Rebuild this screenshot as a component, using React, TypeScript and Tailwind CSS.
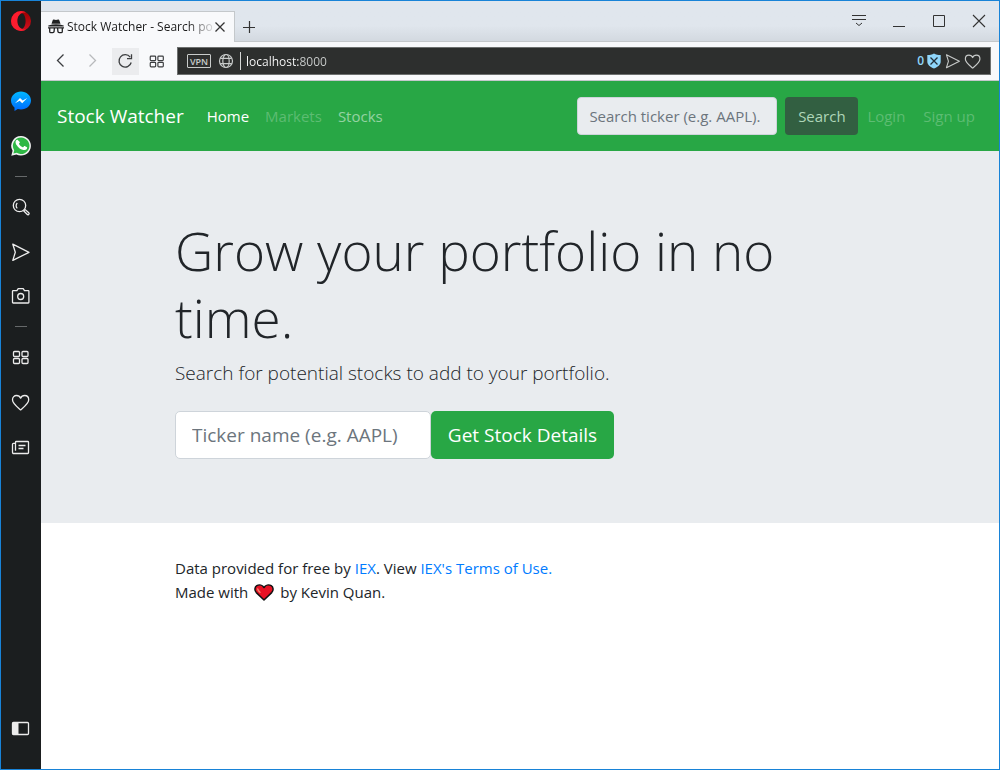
import type { ReactNode } from "react";

type IconProps = { className?: string };

function Stroke({ className = "", width = 1.3, children, box = 20 }: IconProps & { width?: number; children: ReactNode; box?: number }) {
  return (
    <svg className={className} viewBox={`0 0 ${box} ${box}`} fill="none" stroke="currentColor" strokeWidth={width} aria-hidden="true">
      {children}
    </svg>
  );
}

const OperaLogo = () => (
  <svg className="size-5" viewBox="0 0 20 20" aria-hidden="true">
    <defs>
      <linearGradient id="operaLeft" x1="0" y1="0" x2="0" y2="1">
        <stop offset="0" stopColor="#ff1b2d" />
        <stop offset="1" stopColor="#fa1e30" />
      </linearGradient>
      <linearGradient id="operaRight" x1="0" y1="0" x2="0" y2="1">
        <stop offset="0" stopColor="#9c0000" />
        <stop offset="1" stopColor="#d01020" />
      </linearGradient>
    </defs>
    <path fill="url(#operaRight)" fillRule="evenodd" d="M10 0a10 10 0 1 1 0 20a10 10 0 0 1 0-20zM10.400 2.200c-2.500 0-4.200 3.500-4.200 7.800s1.700 7.800 4.200 7.800s4.200-3.500 4.200-7.800s-1.700-7.800-4.200-7.800z" />
    <path fill="url(#operaLeft)" d="M10 0a10 10 0 0 0 0 20c2.200 0 4.200-.7 5.800-1.900c-1.100.6-2.300.6-3.600.3c-3.400-.8-5.900-4.200-5.900-8.400s2.500-7.600 5.900-8.400c1.300-.3 2.500-.2 3.600.3A10 10 0 0 0 10 0z" />
  </svg>
);

const MessengerIcon = () => (
  <svg className="size-5" viewBox="0 0 20 20" aria-hidden="true">
    <defs>
      <linearGradient id="messenger" x1="0" y1="0" x2="0" y2="1">
        <stop offset="0" stopColor="#00b8ff" />
        <stop offset="1" stopColor="#0068ff" />
      </linearGradient>
    </defs>
    <path fill="url(#messenger)" d="M10 .5C4.500.500 0 4.500 0 9.500c0 2.800 1.300 5.200 3.500 6.900V20l3.300-1.900c1 .3 2.100.4 3.200.4c5.500 0 10-4 10-9S15.500.500 10 .500z" />
    <path fill="#fff" d="M4 12.200l5-5.300l2.700 2.600L16.300 7l-5.100 5.300l-2.500-2.600z" />
  </svg>
);

const WhatsAppIcon = () => (
  <svg className="size-5" viewBox="0 0 20 20" aria-hidden="true">
    <path fill="#f2f2f2" d="M10.100 0A9.800 9.800 0 0 0 1.600 14.800L.3 19.800l5.100-1.400A9.800 9.800 0 1 0 10.100 0z" />
    <path fill="#2fb845" d="M10.100 1.600a8.200 8.200 0 0 0-6.900 12.600l-.8 3.400l3.400-.9A8.200 8.200 0 1 0 10.100 1.600z" />
    <path fill="#fff" d="M7.500 5.200c-.2-.4-.4-.4-.7-.4c-.8 0-1.900.9-1.900 2.500c0 1.500 1.100 3 1.300 3.200c.2.200 2.100 3.400 5.300 4.600c2.600 1 3.100.7 3.700.6c.600-.1 1.800-.8 2-1.500s.200-1.300.1-1.400c-.1-.2-.3-.2-.600-.4l-2-.9c-.3-.1-.5-.2-.7.1l-.9 1.100c-.2.200-.3.200-.6.100c-.9-.4-2.800-1.400-3.900-3.500c-.1-.3 0-.4.100-.6l.8-1c.1-.2.1-.4 0-.6z" transform="translate(0 -.6) scale(.93)" />
  </svg>
);

const SearchIcon = () => (
  <Stroke className="size-5">
    <circle cx="8.500" cy="8.500" r="6.200" />
    <path d="M6.300 11.400a3.700 3.700 0 0 1 0-5.400" />
    <path d="M12.800 13.900l1.300-1.300l3.700 3.200c1 .9-.500 2.600-1.500 1.700z" />
  </Stroke>
);
const SendIcon = ({ className = "size-5" }: IconProps) => (
  <Stroke className={className}>
    <path strokeLinejoin="round" d="M1.800 2.200L18 10.300L1.800 18.400L4.300 10.300z" />
  </Stroke>
);
const CameraIcon = () => (
  <Stroke className="size-5">
    <path strokeLinejoin="round" d="M2.200 4.600h3.700l1.300-1.900h5l1.300 1.900h3.700q.7 0 .7.700v11q0 .7-.7.700H2.200q-.7 0-.7-.7v-11q0-.7.700-.7z" />
    <circle cx="9.700" cy="10.500" r="3" />
  </Stroke>
);
const GridIcon = ({ className = "size-5" }: IconProps) => (
  <Stroke className={className}>
    <rect x="2.500" y="4.500" width="6" height="5" rx="1" />
    <rect x="11" y="4.500" width="6" height="5" rx="1" />
    <rect x="2.500" y="11.500" width="6" height="5" rx="1" />
    <rect x="11" y="11.500" width="6" height="5" rx="1" />
  </Stroke>
);
const HeartIcon = ({ className = "size-5" }: IconProps) => (
  <Stroke className={className}>
    <path strokeLinejoin="round" d="M9.600 17.900C6 14.800 1.500 11.600 1.500 7.800C1.500 5.200 3.400 3.500 5.500 3.500C7.300 3.500 8.900 4.500 9.600 6.200C10.300 4.500 11.900 3.500 13.700 3.500C15.900 3.500 17.700 5.200 17.700 7.800C17.700 11.600 13.200 14.800 9.600 17.900z" />
  </Stroke>
);
const NewsIcon = () => (
  <Stroke className="size-5">
    <path strokeLinejoin="round" d="M4.500 5.300q0-.8.800-.8h11.400q.8 0 .8.800v10.400q0 .8-.8.800H2.800q-1.300 0-1.300-1.300V7.200q0-.9.900-.9H4.500zM4.500 6.300v7.500" />
    <path d="M7.500 8.500h7M7.500 11.500h5" />
  </Stroke>
);
const PanelIcon = () => (
  <Stroke className="size-5">
    <rect x="1.500" y="4.500" width="16" height="12" rx="1" />
    <path fill="currentColor" stroke="none" d="M1.500 4.500h6v12h-6z" />
  </Stroke>
);

const IncognitoIcon = () => (
  <svg className="size-4 shrink-0" viewBox="0 0 16 16" fill="#202122" aria-hidden="true">
    <path d="M3.500 4.800L4.700 1.200Q5 .3 5.900.6L8 1.100L10.100.6Q11 .3 11.300 1.200L12.500 4.800z" />
    <path d="M.3 6.500Q8 4.200 15.700 6.500V7.400H.3z" />
    <path fill="none" stroke="#202122" strokeWidth="1.300" d="M0 8.900h16M1.700 9v3.400q0 1.200 1.200 1.200h1.900q1.200 0 1.300-1.200L6.400 9M9.600 9l.3 3.400q.1 1.200 1.300 1.200h1.900q1.200 0 1.200-1.200V9" />
  </svg>
);

function SideButton({ label, className, children }: { label: string; className: string; children: ReactNode }) {
  return (
    <button type="button" aria-label={label} className={`flex size-5 items-center justify-center ${className}`}>
      {children}
    </button>
  );
}

function Sidebar() {
  return (
    <aside className="flex w-10 shrink-0 flex-col items-center bg-[#1b1e1f] pt-[10px] pb-[31px] text-[#ececec]">
      <SideButton label="Opera menu" className=""><OperaLogo /></SideButton>
      <SideButton label="Messenger" className="mt-[60px]"><MessengerIcon /></SideButton>
      <SideButton label="WhatsApp" className="mt-[25px]"><WhatsAppIcon /></SideButton>
      <hr className="mt-5 w-3 border-[#66696a]" />
      <SideButton label="Search" className="mt-5"><SearchIcon /></SideButton>
      <SideButton label="My Flow" className="mt-[25px]"><SendIcon /></SideButton>
      <SideButton label="Snapshot" className="mt-6"><CameraIcon /></SideButton>
      <hr className="mt-5 w-3 border-[#66696a]" />
      <SideButton label="Speed Dial" className="mt-5"><GridIcon /></SideButton>
      <SideButton label="Bookmarks" className="mt-[25px]"><HeartIcon /></SideButton>
      <SideButton label="News" className="mt-[25px]"><NewsIcon /></SideButton>
      <SideButton label="Toggle sidebar" className="mt-auto"><PanelIcon /></SideButton>
    </aside>
  );
}

function TabStrip() {
  return (
    <div className="flex h-[41px] items-stretch bg-linear-to-b from-[#e0e6ed] from-60% to-[#d2d8df]">
      <div className="mt-[10px] flex w-[194px] items-center border-t border-r border-[#c4c8cb] bg-[#f8f9fb] pl-[7px]">
        <IncognitoIcon />
        <span className="ml-[3px] w-[147px] bg-linear-to-r from-[#1a1a1a] from-82% to-[#1a1a1a]/10 bg-clip-text text-[12px] whitespace-nowrap text-transparent">
          Stock Watcher - Search po
        </span>
        <button type="button" aria-label="Close tab" className="text-[#333]">
          <Stroke className="size-3" box={12} width={1.3}><path d="M1.500 1.500l9 9M10.500 1.500l-9 9" /></Stroke>
        </button>
      </div>
      <div className="flex flex-1 items-center border-b border-[#c4c8cb] pl-2 text-[#333]">
        <button type="button" aria-label="New tab" className="mt-3">
          <Stroke className="size-3" box={12} width={1.2}><path d="M6.500 0v12M0 6.500h12" /></Stroke>
        </button>
        <div className="ml-auto flex items-center gap-6 pr-[12px]">
          <button type="button" aria-label="Tab menu">
            <Stroke className="size-4" box={16} width={1}><path d="M1 2.500h14M1 6.500h14M5 10l3 2.500l3-2.500" /></Stroke>
          </button>
          <button type="button" aria-label="Minimize">
            <Stroke className="size-4" box={16} width={1}><path d="M2 13.500h12" /></Stroke>
          </button>
          <button type="button" aria-label="Maximize">
            <Stroke className="size-4" box={16} width={1}><path d="M2.500 2.500h11v11h-11z" /></Stroke>
          </button>
          <button type="button" aria-label="Close window">
            <Stroke className="size-4" box={16} width={1.100}><path d="M2 2l12 12M14 2l-12 12" /></Stroke>
          </button>
        </div>
      </div>
    </div>
  );
}

function Toolbar() {
  return (
    <div className="flex h-[39px] items-center border-b border-[#c4c8cb] bg-[#f8f9fb] pr-2 pl-[10px] text-[#3c3e40]">
      <button type="button" aria-label="Back">
        <Stroke className="size-5" width={1.300}><path d="M12.500 3.500l-6 6l6 6" /></Stroke>
      </button>
      <button type="button" aria-label="Forward" disabled className="ml-3 text-[#b8babc]">
        <Stroke className="size-5" width={1.300}><path d="M6.500 3.500l6 6l-6 6" /></Stroke>
      </button>
      <button type="button" aria-label="Reload" className="ml-[9px] flex h-[27px] w-[27px] items-center justify-center bg-[#ebecee]">
        <Stroke className="size-5" width={1.300}>
          <path d="M14.200 6.200A6.200 6.200 0 1 0 15.200 11.500" />
          <path d="M15.500 3.200v4.500h-4.500" />
        </Stroke>
      </button>
      <button type="button" aria-label="Speed dial" className="ml-[9px]">
        <GridIcon className="size-[18px]" />
      </button>
      <div className="ml-[11px] flex h-[28px] flex-1 items-center border border-[#6d706f] bg-[#2d2f2e] pr-2 pl-[9px] text-[#c8cbca]">
        <button type="button" className="flex h-[14px] w-6 items-center justify-center rounded-[1px] border border-[#c8cbca] text-[9px] leading-none font-semibold">
          VPN
        </button>
        <Stroke className="ml-[7px] size-4" box={16} width={1.200}>
          <circle cx="8" cy="8" r="6.500" />
          <ellipse cx="8" cy="8" rx="3.200" ry="6.500" />
          <path d="M2.300 5.300h11.400M2.300 10.700h11.400" />
        </Stroke>
        <span className="ml-[6px] h-[18px] w-px bg-[#d5d7d6]" />
        <input
          type="text"
          aria-label="Address"
          defaultValue="localhost:8000"
          className="ml-[5px] h-5 min-w-0 flex-1 bg-linear-to-r from-white from-[54px] to-[#cdd0cf] to-[54px] bg-clip-text text-[12px] text-transparent outline-none"
        />
        <span className="mr-[2px] text-[12px] font-semibold text-[#8fd6fb]">0</span>
        <button type="button" aria-label="Ad blocker">
          <svg className="size-4" viewBox="0 0 16 16" aria-hidden="true">
            <path fill="#8fd6fb" d="M8 .5C6 2 4 2 1.300 2v6.500c0 3.500 3 5.500 6.700 7c3.700-1.500 6.700-3.500 6.700-7V2C12 2 10 2 8 .500z" />
            <path stroke="#22303a" strokeWidth="1.300" d="M4.500 4.500l7 7M11.500 4.500l-7 7" />
          </svg>
        </button>
        <button type="button" aria-label="Send to My Flow" className="ml-[3px]"><SendIcon className="size-4" /></button>
        <button type="button" aria-label="Add to bookmarks" className="ml-[3px]"><HeartIcon className="size-[18px]" /></button>
      </div>
    </div>
  );
}

function Navbar() {
  return (
    <nav className="flex h-[70px] items-center bg-[#28a745] px-4 text-[15px] leading-6">
      <a href="#" className="mr-4 text-[19px] leading-[30px] whitespace-nowrap text-white">Stock Watcher</a>
      <ul className="flex">
        <li><a href="#" className="py-2 pr-2 pl-[7px] text-white">Home</a></li>
        <li><a href="#" aria-disabled="true" className="p-2 text-white/25">Markets</a></li>
        <li><a href="#" className="p-2 text-white/50">Stocks</a></li>
      </ul>
      <form className="ml-auto flex gap-2">
        <input
          type="text"
          aria-label="Search ticker"
          disabled
          placeholder="Search ticker (e.g. AAPL)."
          className="h-[38px] w-[200px] rounded border border-[#ced4da] bg-[#e9ecef] px-[11px] placeholder:text-[#6c757d]"
        />
        <button type="submit" disabled className="h-[38px] w-[73px] rounded bg-[#325f41] text-[#aed6b8]">Search</button>
      </form>
      <ul className="ml-px flex gap-[2px] whitespace-nowrap">
        <li><a href="#" aria-disabled="true" className="p-2 text-white/25">Login</a></li>
        <li><a href="#" aria-disabled="true" className="p-2 text-white/25">Sign up</a></li>
      </ul>
    </nav>
  );
}

function Hero() {
  return (
    <section className="bg-[#e9ecef] pt-[66px] pb-16">
      <div className="mx-auto max-w-[720px] px-[15px]">
        <h1 className="text-[53px] leading-[67px] font-light">Grow your portfolio in no time.</h1>
        <p className="mt-[7px] text-[19px] leading-[30px] font-light">Search for potential stocks to add to your portfolio.</p>
        <form className="mt-[23px] flex text-[19px]">
          <input
            type="text"
            aria-label="Ticker name"
            placeholder="Ticker name (e.g. AAPL)"
            className="h-12 w-64 rounded-[5px] border border-[#ced4da] bg-white px-4 placeholder:text-[#6c757d]"
          />
          <button type="submit" className="h-12 w-[183px] rounded-[5px] bg-[#28a745] whitespace-nowrap text-white">Get Stock Details</button>
        </form>
      </div>
    </section>
  );
}

function Footer() {
  return (
    <footer className="mx-auto w-full max-w-[720px] px-[15px] pt-[33px] text-[15px] leading-6">
      <p>
        Data provided for free by <a href="#" className="text-[#007bff]">IEX</a>. View{" "}
        <a href="#" className="text-[#007bff]">IEX's Terms of Use.</a>
      </p>
      <p className="flex items-center gap-[6px]">
        Made with
        <svg className="h-[17px] w-5" viewBox="0 0 20 17" role="img" aria-label="love">
          <path fill="#e81224" stroke="#111" strokeWidth="1.500" strokeLinejoin="round" d="M10 16L2.300 8.600C.2 6.300.6 3 2.800 1.700C5.300.3 8.500 1 10 3.500C11.500 1 14.700.3 17.200 1.700C19.400 3 19.800 6.300 17.700 8.600z" />
          <path fill="none" stroke="#f4826b" strokeWidth="1.400" strokeLinecap="round" d="M3.700 5q.5 1.800 2.300 3.300" />
        </svg>
        by Kevin Quan.
      </p>
    </footer>
  );
}

export default function App() {
  return (
    <div className="flex min-h-screen border border-[#1883d7] bg-white font-['Open_Sans',sans-serif] text-[#212529]">
      <Sidebar />
      <div className="flex min-w-0 flex-1 flex-col">
        <TabStrip />
        <Toolbar />
        <Navbar />
        <main>
          <Hero />
        </main>
        <Footer />
      </div>
    </div>
  );
}
